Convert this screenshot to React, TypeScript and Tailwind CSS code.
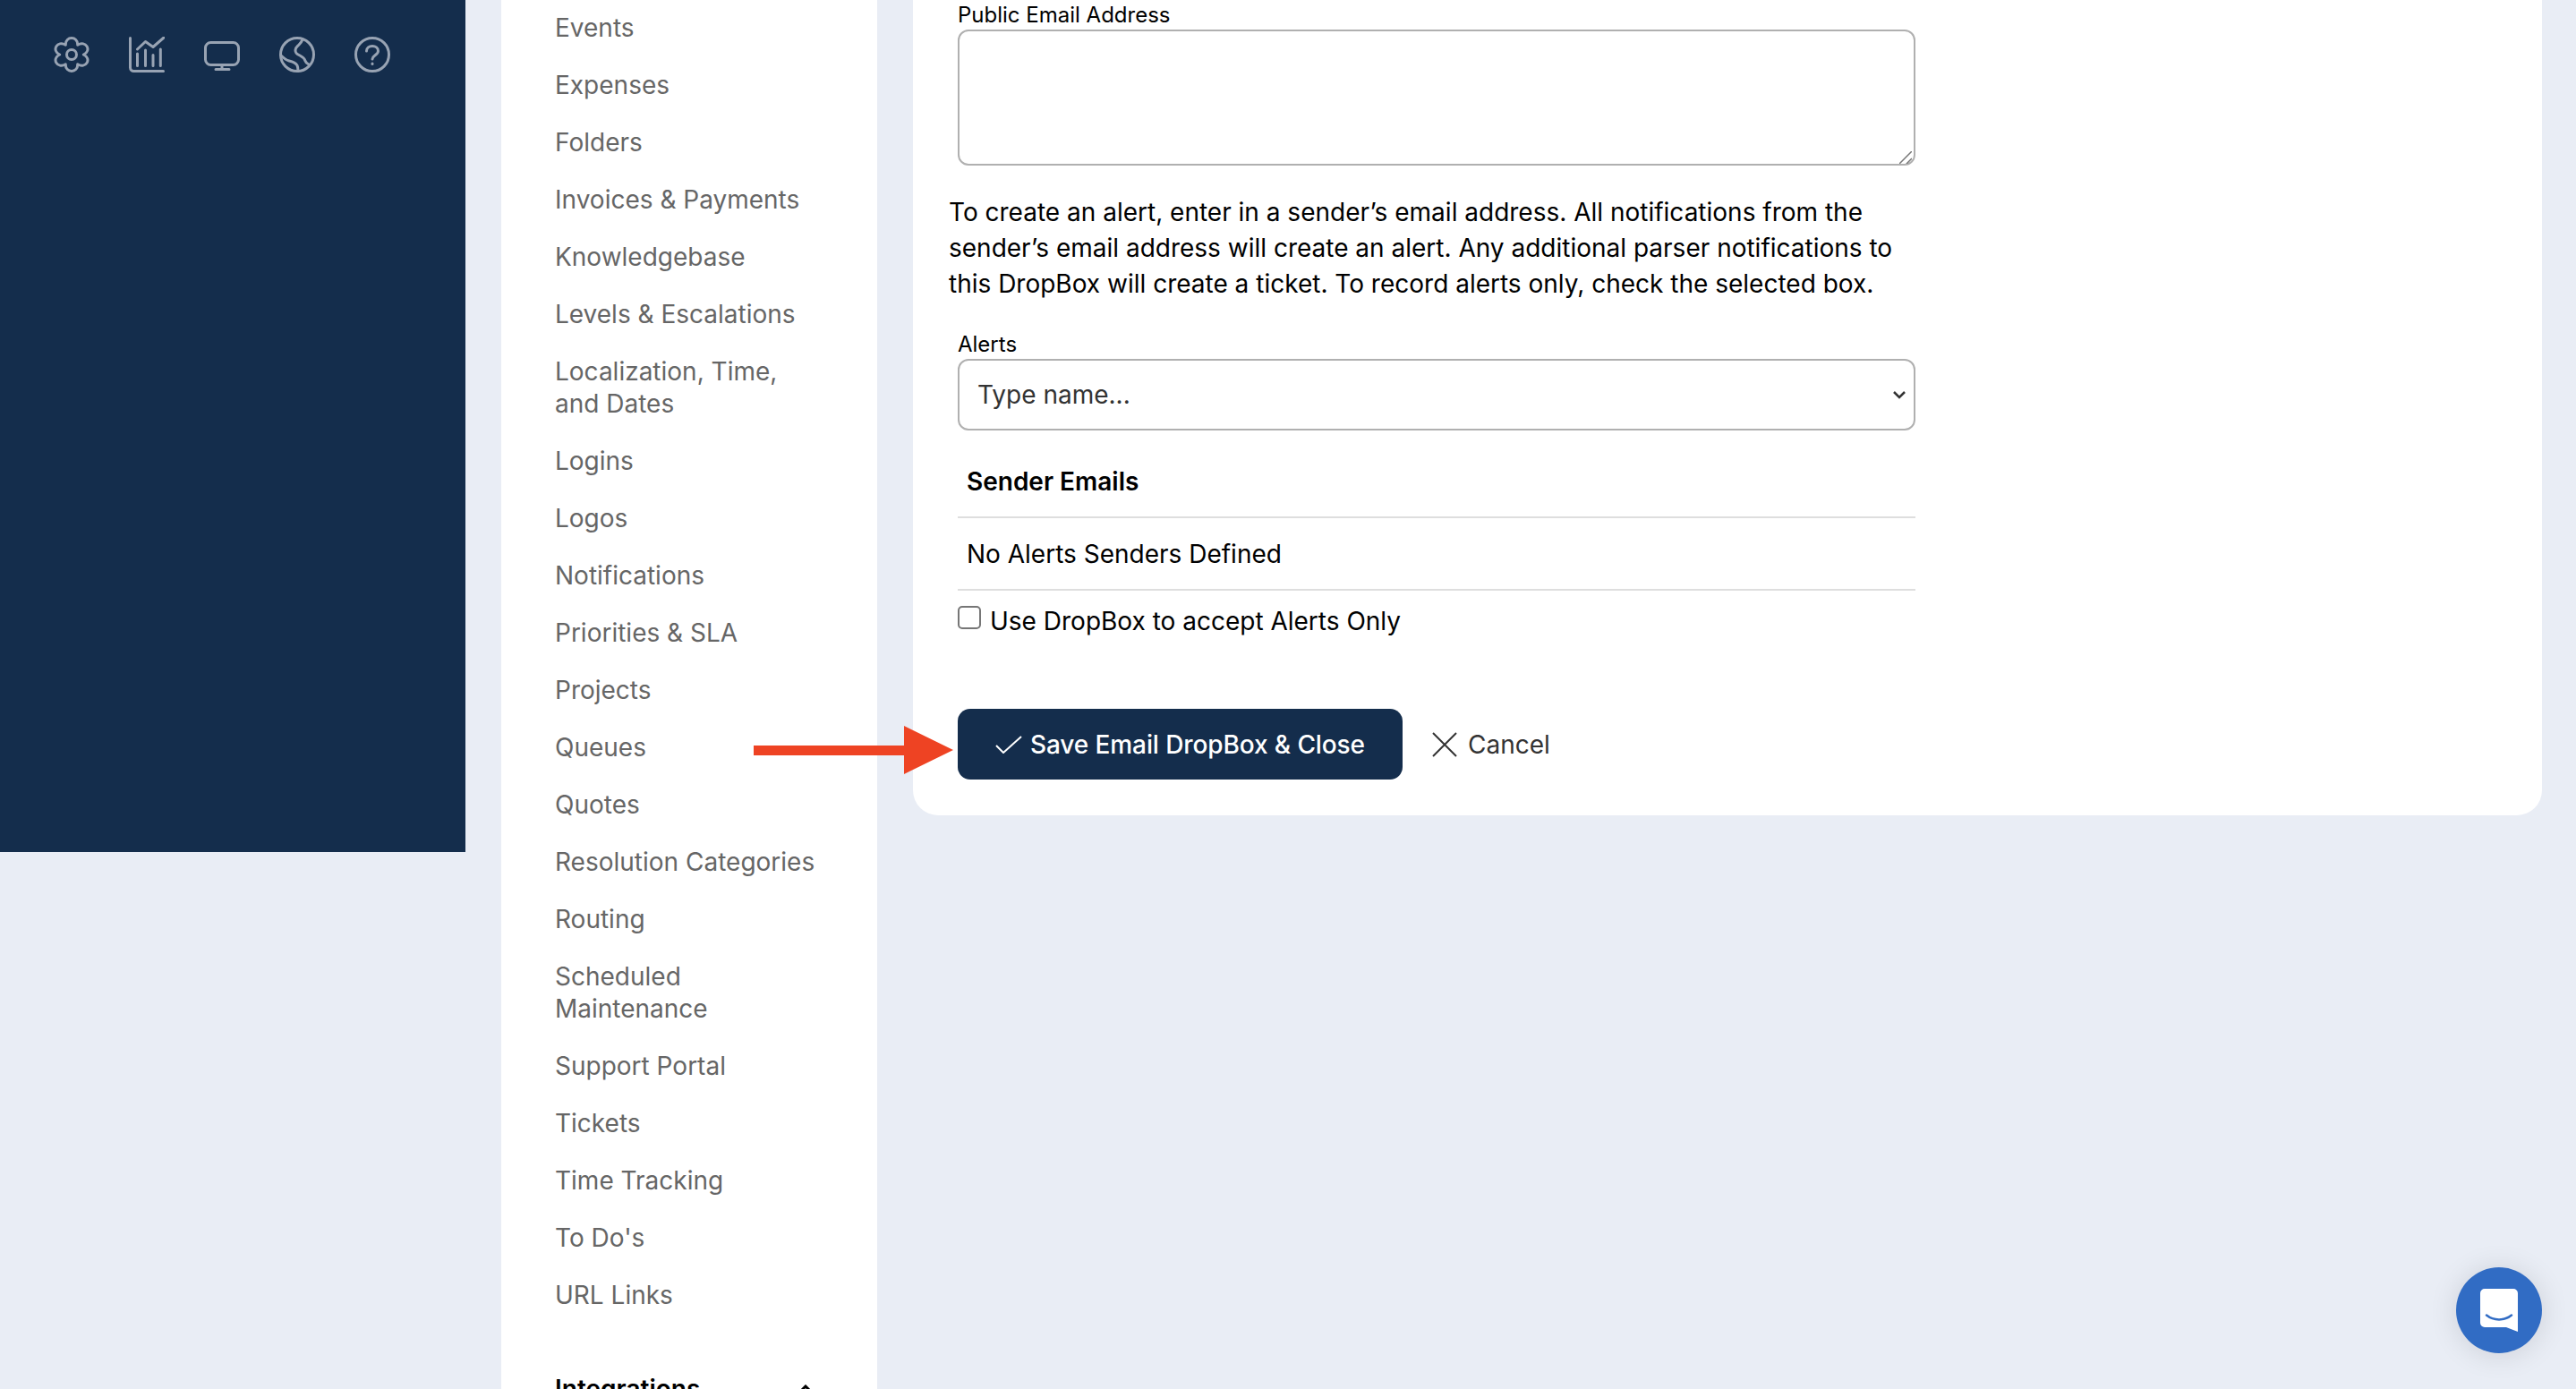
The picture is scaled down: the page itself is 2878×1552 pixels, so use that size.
import React from "react";

const items: string[] = [
  "Events", "Expenses", "Folders", "Invoices & Payments", "Knowledgebase", "Levels & Escalations",
  "Localization, Time, and Dates", "Logins", "Logos", "Notifications", "Priorities & SLA", "Projects",
  "Queues", "Quotes", "Resolution Categories", "Routing", "Scheduled Maintenance", "Support Portal",
  "Tickets", "Time Tracking", "To Do's", "URL Links",
];

function gearPath(): string {
  const pt = (deg: number, r: number) => {
    const a = (deg * Math.PI) / 180;
    return `${(20 + r * Math.cos(a) * 1.07).toFixed(2)} ${(20 + r * Math.sin(a)).toFixed(2)}`;
  };
  let d = `M${pt(-120, 12.5)}`;
  for (let i = 0; i < 6; i++) {
    const a = -90 + i * 60;
    d += `C${pt(a - 18, 22)} ${pt(a + 18, 22)} ${pt(a + 30, 12.5)}`;
  }
  return d + "Z";
}

function Icons() {
  const c = { fill: "none", stroke: "#98a3b3", strokeWidth: 3, strokeLinecap: "round" as const, strokeLinejoin: "round" as const };
  return (
    <div className="flex items-center gap-[44px] pl-[60px] pt-[41px]">
      <svg width="40" height="40" viewBox="0 0 40 40" {...c}>
        <path d={gearPath()} />
        <circle cx="20" cy="20" r="5.500" />
      </svg>
      <svg width="40" height="40" viewBox="0 0 40 40" {...c}>
        <path d="M1.500 1.500v33a4 4 0 0 0 4 4h33" />
        <path d="M9.500 14l9-8.500 8.500 6L39 1" />
        <path d="M9.500 19v13.500M18.500 15v17.500M27 20.500v12M35.300 14v18.500" />
      </svg>
      <svg width="40" height="40" viewBox="0 0 40 40" {...c}>
        <rect x="1.500" y="6.500" width="37" height="25" rx="6" />
        <path d="M20 31.500v5M13 36.500h15" />
      </svg>
      <svg width="40" height="40" viewBox="0 0 40 40" {...c}>
        <circle cx="20" cy="20" r="18.500" />
        <path d="M26 3c-1 3-2 4-4 6-2 2-4 3-4 6 0 3 1 4 5 6 3 1.500 5 3 6 6 .5 1.500 2 3 4 4" />
        <path d="M2 21c3 3 5 5 9 6 4 1 7 2 9 5 1 2 1 5 1 7" />
      </svg>
      <svg width="40" height="40" viewBox="0 0 40 40" {...c}>
        <circle cx="20" cy="20" r="18.500" />
        <path d="M13.500 16c0-3.500 3-5.500 6.500-5.500s6.500 2 6.500 5.500c0 4.500-6.500 5-6.500 9" />
        <path d="M20 30v.500" />
      </svg>
    </div>
  );
}

export default function App() {
  return (
    <div className="flex h-[1552px] w-[2878px] overflow-hidden bg-[#e9edf5] text-black" style={{ fontFamily: "Inter, 'Liberation Sans', sans-serif" }}>
      <aside className="h-full w-[520px] shrink-0">
        <div className="h-[952px] bg-[#142d4c]"><Icons /></div>
      </aside>
      <nav className="ml-[40px] h-full w-[420px] shrink-0 bg-white pl-[60px] pr-[60px] pt-[13px] text-[28px] leading-[36px] text-[#666666]">
        {items.map((t) => (
          <div key={t} className="mb-[28px]">{t}</div>
        ))}
        <div className="mt-[69px] flex items-center justify-between font-semibold text-black">
          <span>Integrations</span>
          <svg className="mr-[12px]" width="16" height="10" viewBox="0 0 16 10" fill="none" stroke="black" strokeWidth="3"><path d="M2 8l6-6 6 6" /></svg>
        </div>
      </nav>
      <main className="relative ml-[40px] flex-1">
        <section className="w-[1820px] rounded-b-[28px] bg-white pb-[40px] pl-[50px] text-[28px]">
          <label className="block pt-[1px] text-[24px] leading-[32px]">Public Email Address</label>
          <div className="relative h-[152px] w-[1070px]">
            <textarea className="block h-[152px] w-[1070px] resize-none rounded-[12px] border-2 border-[#b0b0b0]" />
            <svg className="pointer-events-none absolute bottom-[2px] right-[4px]" width="14" height="14" viewBox="0 0 14 14" fill="none" stroke="#777" strokeWidth="1.500"><path d="M14 0L0 14M14 8L8 14" /></svg>
          </div>
          <p className="mt-[32px] -ml-[10px] w-[1090px] leading-[40px]">To create an alert, enter in a sender’s email address. All notifications from the sender’s email address will create an alert. Any additional parser notifications to this DropBox will create a ticket. To record alerts only, check the selected box.</p>
          <label className="mt-[32px] block text-[24px] leading-[32px]">Alerts</label>
          <div className="flex h-[80px] w-[1070px] items-center justify-between rounded-[12px] border-2 border-[#b0b0b0] pl-[20px] pr-[8px] text-[#333]">
            <span>Type name...</span>
            <svg width="16" height="10" viewBox="0 0 16 10" fill="none" stroke="#333" strokeWidth="2.500"><path d="M2 2l6 6 6-6" /></svg>
          </div>
          <div className="mt-[17px] w-[1070px]">
            <div className="flex h-[81px] items-center border-b-2 border-[#dedede] pl-[10px] font-semibold">Sender Emails</div>
            <div className="flex h-[81px] items-center border-b-2 border-[#dedede] pl-[10px]">No Alerts Senders Defined</div>
          </div>
          <div className="mt-[14px] flex items-center gap-[10px] leading-[40px]">
            <input type="checkbox" className="-mt-[9px] h-[26px] w-[26px] appearance-none rounded-[5px] border-2 border-[#767676] bg-white" />
            <span>Use DropBox to accept Alerts Only</span>
          </div>
          <div className="mt-[78px] flex items-center">
            <button className="flex h-[79px] w-[497px] items-center justify-start gap-[9px] rounded-[14px] bg-[#142d4c] pl-[42px] font-medium tracking-[-0.1px] text-white">
              <svg width="30" height="20" viewBox="0 0 30 20" fill="none" stroke="white" strokeWidth="2"><path d="M1 11l8 8L29 1" /></svg>
              Save Email DropBox &amp; Close
            </button>
            <div className="ml-[33px] flex items-center gap-[12px] text-[#333]">
              <svg width="28" height="28" viewBox="0 0 28 28" fill="none" stroke="#333" strokeWidth="2"><path d="M1 1l26 26M27 1L1 27" /></svg>
              Cancel
            </div>
          </div>
        </section>
        <div className="absolute left-[-178px] top-[811px]">
          <svg width="223" height="54" viewBox="0 0 223 54" className="block"><path d="M0 22h168V0l55 27-55 27V33H0z" fill="#ee4323" /></svg>
        </div>
        <div className="absolute left-[1724px] top-[1416px] flex h-[96px] w-[96px] items-center justify-center rounded-full bg-[#316cc4] shadow-[0_2px_32px_rgba(0,0,0,0.12)]">
          <svg width="42" height="48" viewBox="0 0 42 48">
            <path d="M5 0h32a5 5 0 0 1 5 5v43l-13-5H5a5 5 0 0 1-5-5V5a5 5 0 0 1 5-5z" fill="white" />
            <path d="M7 29.500c8 6.500 20 6.500 28 0" fill="none" stroke="#316cc4" strokeWidth="2.500" strokeLinecap="round" />
          </svg>
        </div>
      </main>
    </div>
  );
}
